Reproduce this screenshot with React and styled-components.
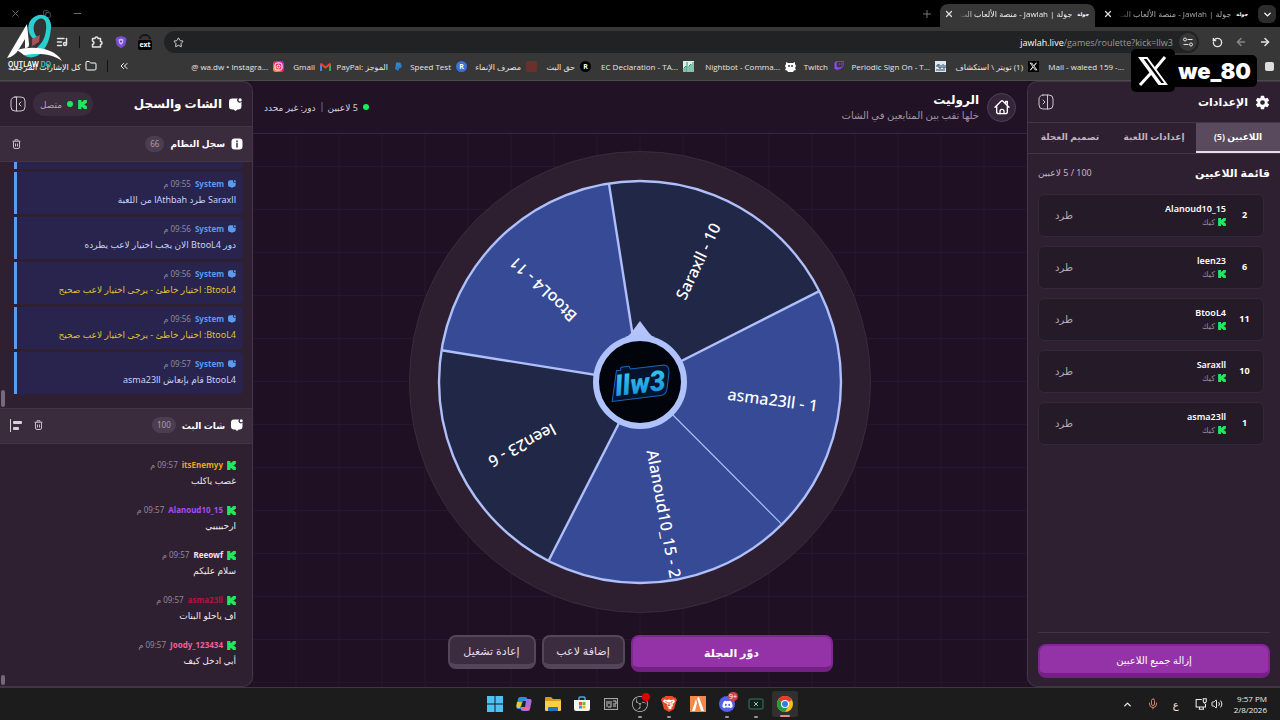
import styled, { createGlobalStyle, ThemeProvider, css } from "styled-components";
import {
  ArrowLeft,
  ArrowRight,
  ChevronDown,
  ChevronUp,
  ChevronsLeft,
  Copy,
  Folder,
  ListMusic,
  Mic,
  Minus,
  Plus,
  RotateCcw,
  Star,
  Volume2,
  X,
} from "lucide-react";
import { FaDiscord, FaPaypal, FaTwitch, FaXTwitter } from "react-icons/fa6";
import { IoSettingsSharp } from "react-icons/io5";
import { SiObsstudio } from "react-icons/si";

const theme = {
  colors: {
    page: "#1f1024",
    panel: "#2e1f31",
    panelRaised: "#3a2b3d",
    line: "#43344a",
    card: "#251a27",
    accent: "#9433a8",
    accentDark: "#732183",
    kick: "#1fe85c",
    system: "#5a9bf0",
    wheelLight: "#374a96",
    wheelDark: "#212746",
    wheelLine: "#aebffa",
  },
  fonts: {
    ui: '"Noto Sans", "DejaVu Sans", sans-serif',
    chrome: '"Open Sans", "DejaVu Sans", sans-serif',
  },
};

const GlobalStyle = createGlobalStyle`
  * {
    box-sizing: border-box;
  }
  body {
    margin: 0;
    background: #1c1c1c;
  }
  button {
    font-family: inherit;
    padding: 0;
    border: 0;
    background: none;
    color: inherit;
    cursor: pointer;
  }
  h1, h2, h3, p, ul {
    margin: 0;
    padding: 0;
  }
  ul {
    list-style: none;
  }
`;

/* ---------- data ---------- */

const bookmarks = [
  { label: "", icon: "square", width: 135 },
  { label: "Mail - waleed 159 -...", icon: "blank", width: 101 },
  { label: "(1) تويتر \\ استكشاف", icon: "x", width: 93 },
  { label: "Periodic Sign On - T...", icon: "tsn", width: 102 },
  { label: "Twitch", icon: "twitch", width: 48 },
  { label: "Nightbot - Comma...", icon: "nightbot", width: 102 },
  { label: "EC Declaration - TA...", icon: "green", width: 103 },
  { label: "حق البث", icon: "rBlack", width: 54 },
  { label: "مصرف الإنماء", icon: "red", width: 70 },
  { label: "Speed Test", icon: "rBlue", width: 63 },
  { label: "PayPal: الموجز", icon: "paypal", width: 73 },
  { label: "Gmail", icon: "gmail", width: 47 },
  { label: "@ wa.dw • Instagra...", icon: "insta", width: 96 },
];

const systemLog = [
  { time: "09:55", text: "Saraxll طرد lAthbah من اللعبة" },
  { time: "09:56", text: "دور BtooL4 الان يجب اختيار لاعب يطرده" },
  { time: "09:56", text: "BtooL4: اختيار خاطئ - يرجى اختيار لاعب صحيح", warn: true },
  { time: "09:56", text: "BtooL4: اختيار خاطئ - يرجى اختيار لاعب صحيح", warn: true },
  { time: "09:57", text: "BtooL4 قام بإنعاش asma23ll" },
];

const chat = [
  { name: "itsEnemyy", color: "#f5a31a", text: "غصب ياكلب" },
  { name: "Alanoud10_15", color: "#a94df0", text: "ارحبيييي" },
  { name: "Reeowf", color: "#fbe0ee", text: "سلام عليكم" },
  { name: "asma23ll", color: "#b5123f", text: "اف ياحلو البنات" },
  { name: "Joody_123434", color: "#f2609a", text: "أبي ادخل كيف" },
];

const players = [
  { id: 2, name: "Alanoud10_15" },
  { id: 6, name: "leen23" },
  { id: 11, name: "BtooL4" },
  { id: 10, name: "Saraxll" },
  { id: 1, name: "asma23ll" },
];

const slices = [
  { label: "Saraxll - 10", dark: true },
  { label: "asma23ll - 1" },
  { label: "Alanoud10_15 - 2" },
  { label: "leen23 - 6", dark: true },
  { label: "BtooL4 - 11" },
];

/* ---------- small drawings ---------- */

const KickMark = ({ size = 9 }) => (
  <svg width={size} height={size} viewBox="1 0 22 24" preserveAspectRatio="none" aria-hidden="true">
    <path
      fill="#1fe85c"
      d="M1.3 0h8v5.3H12V2.7h2.7V0h8v8H20v2.7h-2.7v2.6H20V16h2.7v8h-8v-2.7H12v-2.6H9.3V24h-8z"
    />
  </svg>
);

const ChatIcon = ({ size = 12, color = "#fff" }) => (
  <svg width={size} height={size} viewBox="0 0 24 24" fill={color} aria-hidden="true">
    <path d="M6 1h10a4.500 4.500 0 0 0 7 6v8a6 6 0 0 1-6 6h-1.500L12 24l-3.500-3H6a6 6 0 0 1-6-6V7a6 6 0 0 1 6-6z" />
    <circle cx="20.500" cy="3.500" r="3" />
  </svg>
);

const HomeIcon = () => (
  <svg width="16" height="16" viewBox="0 0 24 24" fill="none" stroke="#fff" strokeWidth="2" strokeLinecap="round" strokeLinejoin="round" aria-hidden="true">
    <path d="M1.500 12.500 10.500 3.300a2.200 2.200 0 0 1 3 0l9 9.200" />
    <path d="M4 10.500V19a3 3 0 0 0 3 3h10a3 3 0 0 0 3-3v-8.500M17.500 6V3.500H20V8" />
    <path d="M9 22v-3.500a3 3 0 0 1 6 0V22" />
  </svg>
);

const InfoIcon = () => (
  <svg width="12" height="12" viewBox="0 0 24 24" aria-hidden="true">
    <rect x="1" y="1" width="22" height="22" rx="6" fill="#fff" />
    <path d="M12 11v7M12 6v1.500" stroke="#3a2b3d" strokeWidth="3" strokeLinecap="round" />
  </svg>
);

const AlignIcon = () => (
  <svg width="12" height="13" viewBox="0 0 12 13" fill="#d8cfda" aria-hidden="true">
    <path d="M0 0h1v13H0z" />
    <rect x="3" y="2" width="9" height="3" rx="1" />
    <rect x="3" y="8" width="6" height="3" rx="1" />
  </svg>
);

const TrashIcon = () => (
  <svg width="9" height="10" viewBox="0 0 18 20" fill="none" stroke="currentColor" strokeWidth="2" aria-hidden="true">
    <path d="M1 4.500h16M6 4V1.500h6V4M3 5v11q0 3 3 3h6q3 0 3-3V5M7 9v6M11 9v6" />
  </svg>
);

const PanelIcon = ({ opens }) => (
  <svg width="16" height="16" viewBox="0 0 16 16" fill="none" stroke="currentColor" strokeLinecap="round" strokeLinejoin="round" aria-hidden="true">
    <rect x="1" y="1" width="14" height="14" rx="4" />
    {opens === "right" ? <path d="M9.500 1v14M5 6l2 2-2 2" /> : <path d="M6.500 1v14M11 6 9 8l2 2" />}
  </svg>
);

const PuzzleIcon = () => (
  <svg width="12" height="12" viewBox="0 0 24 24" fill="none" stroke="currentColor" strokeWidth="3" strokeLinejoin="round" aria-hidden="true">
    <path d="M3 5h5q0-3 3-3t3 3h5v6q3 0 3 3t-3 3v5H3v-5q3-1 3-3.500T3 10z" />
  </svg>
);

const TuneIcon = () => (
  <svg width="10" height="10" viewBox="0 0 20 20" fill="none" stroke="#e4e4e4" strokeWidth="2" aria-hidden="true">
    <circle cx="4" cy="5" r="3" />
    <path d="M9 5h10M1 15h10" />
    <circle cx="16" cy="15" r="3" />
  </svg>
);

function BookmarkIcon({ kind }) {
  if (kind === "x") {
    return (
      <IconTile $bg="#000">
        <FaXTwitter size={9} />
      </IconTile>
    );
  }
  if (kind === "twitch") return <IconTile><FaTwitch size={10} color="#8b4af0" /></IconTile>;
  if (kind === "paypal") return <IconTile><FaPaypal size={9} color="#2a86d8" /></IconTile>;
  if (kind === "rBlack") return <IconTile $bg="#000" $round>R</IconTile>;
  if (kind === "rBlue") return <IconTile $bg="#3d6fe0" $round>R</IconTile>;
  return (
    <svg width="11" height="11" viewBox="0 0 11 11" aria-hidden="true">
      {kind === "square" && <rect x="1" y="1" width="9" height="9" rx="2" fill="#ddd" />}
      {kind === "red" && <rect width="11" height="11" rx="2" fill="#6b302b" />}
      {kind === "tsn" && (
        <>
          <path d="M0 0h11v11H0z" fill="#dfe9f2" />
          <path d="M1 5h2v-2M4 3v4h2v-3M8 3v4h2v-3M1 9h9" stroke="#2b4a66" fill="none" />
        </>
      )}
      {kind === "green" && (
        <>
          <path d="M0 0h11v11H0z" fill="#dff0e9" />
          <path d="M1 11V7l2-2v6M4 11V1M6 11V5l2-2v8M10 1v10" stroke="#2e9077" fill="none" />
        </>
      )}
      {kind === "nightbot" && (
        <>
          <path d="M1 1l2 1h5l2-1v2l1 2-1 2 1 2-2 .5-1 1.500H3L2 9.500 0 9l1-2-1-2 1-2z" fill="#fff" />
          <circle cx="4" cy="5" r="1" fill="#373737" />
          <circle cx="7" cy="5" r="1" fill="#373737" />
        </>
      )}
      {kind === "gmail" && (
        <>
          <path d="M1 10V3" stroke="#4285f4" strokeWidth="2" />
          <path d="M10 10V3" stroke="#34a853" strokeWidth="2" />
          <path d="M.5 2.500 5.500 6.500l5-4" stroke="#ea4335" strokeWidth="2" fill="none" />
        </>
      )}
      {kind === "insta" && (
        <>
          <defs>
            <linearGradient id="insta" x1="0" y1="1" x2="1" y2="0">
              <stop offset="0" stopColor="#ffb52e" />
              <stop offset="0.5" stopColor="#f0245f" />
              <stop offset="1" stopColor="#b02bd8" />
            </linearGradient>
          </defs>
          <rect width="11" height="11" rx="3" fill="url(#insta)" />
          <rect x="2" y="2" width="7" height="7" rx="2" fill="none" stroke="#fff" />
          <circle cx="5.500" cy="5.500" r="1.500" fill="none" stroke="#fff" />
        </>
      )}
    </svg>
  );
}

const ShieldIcon = () => (
  <svg width="12" height="12" viewBox="0 0 24 24" aria-hidden="true">
    <path d="M12 0l9 3 2 3-2 10c-1 4-6 7-9 8-3-1-8-4-9-8L1 6l2-3z" fill="#7a4fd0" />
    <path d="M12 5l5 2-1 7-4 4-4-4-1-7z" fill="#c9b0ff" />
    <circle cx="12" cy="11" r="2" fill="#5b34b0" />
  </svg>
);

const ExtIcon = () => (
  <svg width="14" height="16" viewBox="0 0 14 16" aria-hidden="true">
    <path d="M2 5a5 4 0 0 1 10 0" fill="none" stroke="#161616" strokeWidth="2" />
    <rect y="6" width="14" height="10" rx="2" fill="#000" />
    <text x="7" y="13" fill="#fff" fontSize="7" fontWeight="700" textAnchor="middle" direction="ltr">
      ext
    </text>
  </svg>
);

const ChannelLogo = () => (
  <svg width="62" height="60" viewBox="0 0 62 60" aria-label="OUTLAW DQ">
    <path
      d="M30 27C22 22 20 8 31 3c9-4 16 3 15 12-1 11-4 19-10 25-6 6-16 6-20-1 8 2 13-2 15-12z"
      fill="#29cfd0"
    />
    <path d="M33 25C27 20 27 9 34 6c6-2 8 4 7 11-1 9-5 15-11 19-3 2-6 2-8 2 6-2 9-7 11-13z" fill="#333" />
    <path d="M22 11 2 45c5-1 9-4 12-9l6-10v9c3 0 4-1 4-4z" fill="#fff" />
    <path d="M12 37c16-5 38-2 45 11-10-8-26-8-38-6z" fill="#fff" />
    <path d="M27 26l8-4-1 7-7 4z" fill="#a5525c" />
    <text x="3" y="54" fill="#fff" fontSize="7" fontFamily="Inter, sans-serif" fontWeight="600" direction="ltr">
      OUTLAW <tspan fill="#29cfd0">DQ</tspan>
    </text>
  </svg>
);

/* ---------- wheel ---------- */

const CENTER = 231;
const RADIUS = 201;
const START = -98.9;
const STEP = 72;

const point = (deg, r) => {
  const rad = (deg * Math.PI) / 180;
  return [CENTER + r * Math.cos(rad), CENTER + r * Math.sin(rad)];
};

function Wheel() {
  return (
    <WheelSvg viewBox="0 0 462 462" role="img" aria-label="الروليت">
      <defs>
        <linearGradient id="hubText" x1="0" y1="0" x2="0" y2="1">
          <stop offset="0" stopColor="#35d2f2" />
          <stop offset="1" stopColor="#1687d8" />
        </linearGradient>
      </defs>
      <circle cx={CENTER} cy={CENTER} r="230.500" fill="#2d1e30" stroke="#3b2b3e" />
      {slices.map((slice, i) => {
        const a = START + i * STEP;
        const [x1, y1] = point(a, RADIUS);
        const [x2, y2] = point(a + STEP, RADIUS);
        return (
          <path
            key={slice.label}
            d={`M${CENTER} ${CENTER}L${x1} ${y1}A${RADIUS} ${RADIUS} 0 0 1 ${x2} ${y2}Z`}
            fill={slice.dark ? theme.colors.wheelDark : theme.colors.wheelLight}
          />
        );
      })}
      {slices.map((slice, i) => {
        const [x, y] = point(START + i * STEP, RADIUS);
        return (
          <line
            key={slice.label}
            x1={CENTER}
            y1={CENTER}
            x2={x}
            y2={y}
            stroke={theme.colors.wheelLine}
            strokeWidth={i === 2 ? 1.2 : 2.4}
          />
        );
      })}
      <circle cx={CENTER} cy={CENTER} r={RADIUS} fill="none" stroke={theme.colors.wheelLine} strokeWidth="2.4" />
      {slices.map((slice, i) => (
        <SliceLabel
          key={slice.label}
          x={CENTER + 134}
          y={CENTER}
          transform={`rotate(${START + 34.500 + i * STEP} ${CENTER} ${CENTER})`}
        >
          {slice.label}
        </SliceLabel>
      ))}
      <path d="M231 170l9 12q2 3 6 4h-30q4-1 6-4z" fill="#b4c4fb" />
      <circle cx={CENTER} cy={CENTER} r="44" fill="#02040c" stroke="#b0c2fb" strokeWidth="6" />
      <g transform="rotate(-7 231 231)">
        <path
          d="M209 217h4l1-3h8l1 3h34q5 1 4 8l-4 16q-2 6-7 6h-49z"
          fill="#04142e"
          stroke="#1f66b8"
        />
        <HubText x="231" y="242" transform="translate(0 0)">llw3</HubText>
      </g>
    </WheelSvg>
  );
}

/* ---------- browser ---------- */

function BrowserTab({ active }) {
  return (
    <Tab $active={active}>
      <TabLogo>جولة</TabLogo>
      <TabTitle>جولة | Jawlah - منصة الألعاب الت</TabTitle>
      <TabClose aria-label="إغلاق">
        <X size={10} strokeWidth={3} />
      </TabClose>
    </Tab>
  );
}

function Browser() {
  return (
    <header>
      <TabStrip>
        <TabSearch aria-label="البحث في علامات التبويب">
          <ChevronDown size={11} strokeWidth={3} />
        </TabSearch>
        <BrowserTab />
        <BrowserTab active />
        <NewTab aria-label="علامة تبويب جديدة">
          <Plus size={12} />
        </NewTab>
        <WindowButtons>
          <button aria-label="تصغير"><Minus size={11} /></button>
          <button aria-label="استعادة"><Copy size={8} /></button>
          <button aria-label="إغلاق"><X size={11} /></button>
        </WindowButtons>
      </TabStrip>
      <Toolbar>
        <ToolButton aria-label="السابق"><ArrowRight size={12} strokeWidth={3} /></ToolButton>
        <ToolButton aria-label="التالي" $dim><ArrowLeft size={12} strokeWidth={3} /></ToolButton>
        <ToolButton aria-label="إعادة تحميل"><RotateCcw size={11} strokeWidth={3} /></ToolButton>
        <Omnibox>
          <SiteButton aria-label="معلومات الموقع"><TuneIcon /></SiteButton>
          <Url>
            <b>jawlah.live</b>/games/roulette?kick=llw3
          </Url>
          <ToolButton aria-label="إشارة مرجعية"><Star size={11} strokeWidth={2} /></ToolButton>
        </Omnibox>
        <ToolButton aria-label="ext"><ExtIcon /></ToolButton>
        <ToolButton aria-label="Brave"><ShieldIcon /></ToolButton>
        <ToolButton aria-label="الإضافات"><PuzzleIcon /></ToolButton>
        <BarDivider />
        <ToolButton aria-label="الوسائط"><ListMusic size={12} strokeWidth={3} /></ToolButton>
        <ToolSpacer />
      </Toolbar>
      <BookmarkBar>
        {bookmarks.map((b) => (
          <Bookmark key={b.icon} href="#" $width={b.width} aria-label={b.label || "تطبيقات"}>
            <BookmarkIcon kind={b.icon} />
            <span dir="auto">{b.label}</span>
          </Bookmark>
        ))}
        <BookmarkEnd>
          <ChevronsLeft size={12} strokeWidth={2} />
          <BarDivider $wide />
          <Folder size={12} strokeWidth={2} />
          <span>كل الإشارات المرجعية</span>
        </BookmarkEnd>
      </BookmarkBar>
    </header>
  );
}

/* ---------- page ---------- */

function SettingsPanel() {
  return (
    <Side $side="right">
      <SideHead $height={40}>
        <IoSettingsSharp size={15} />
        <SideTitle $small>الإعدادات</SideTitle>
        <IconButton aria-label="طي اللوحة"><PanelIcon opens="right" /></IconButton>
      </SideHead>
      <Tabs>
        <TabButton $active>اللاعبين (5)</TabButton>
        <TabButton>إعدادات اللعبة</TabButton>
        <TabButton>تصميم العجلة</TabButton>
      </Tabs>
      <ListHead>
        <h3>قائمة اللاعبين</h3>
        <span>100 / 5 لاعبين</span>
      </ListHead>
      <PlayerList>
        {players.map((p) => (
          <PlayerCard key={p.id}>
            <PlayerNumber>{p.id}</PlayerNumber>
            <PlayerInfo>
              <PlayerName>{p.name}</PlayerName>
              <Platform>
                <KickMark size={8} />
                كيك
              </Platform>
            </PlayerInfo>
            <KickButton>طرد</KickButton>
          </PlayerCard>
        ))}
      </PlayerList>
      <SideFoot>
        <PrimaryButton $height={34}>إزالة جميع اللاعبين</PrimaryButton>
      </SideFoot>
    </Side>
  );
}

function Stage() {
  return (
    <StageArea>
      <StageHead>
        <HomeButton href="#" aria-label="الرئيسية"><HomeIcon /></HomeButton>
        <StageTitles>
          <h1>الروليت</h1>
          <p>خلها تقب بين المتابعين في الشات</p>
        </StageTitles>
        <Status>
          <Dot />
          <span>5 لاعبين</span>
          <StatusDivider />
          <span>دور: غير محدد</span>
        </Status>
      </StageHead>
      <WheelArea>
        <Wheel />
        <Controls>
          <PrimaryButton $height={37} $width={202} $bold>دوّر العجلة</PrimaryButton>
          <GhostButton $width={83}>إضافة لاعب</GhostButton>
          <GhostButton $width={88}>إعادة تشغيل</GhostButton>
        </Controls>
      </WheelArea>
    </StageArea>
  );
}

function ChatPanel() {
  return (
    <Side $side="left">
      <SideHead $height={44}>
        <ChatIcon size={13} />
        <SideTitle>الشات والسجل</SideTitle>
        <Connected>
          <KickMark />
          <Dot />
          متصل
        </Connected>
        <IconButton aria-label="طي اللوحة"><PanelIcon opens="left" /></IconButton>
      </SideHead>
      <SectionHead>
        <InfoIcon />
        <h3>سجل النظام</h3>
        <Count>66</Count>
        <SectionTools>
          <button aria-label="مسح"><TrashIcon /></button>
        </SectionTools>
      </SectionHead>
      <Feed $pad={14}>
        <SystemItem />
        {systemLog.map((m, i) => (
          <SystemItem key={i}>
            <Meta>
              <ChatIcon size={8} color={theme.colors.system} />
              <Author $color={theme.colors.system}>System</Author>
              <Time>{m.time} م</Time>
            </Meta>
            <Message $warn={m.warn} $system>{m.text}</Message>
          </SystemItem>
        ))}
        <Thumb $height={17} />
      </Feed>
      <SectionHead>
        <ChatIcon size={12} />
        <h3>شات البث</h3>
        <Count>100</Count>
        <SectionTools>
          <button aria-label="مسح"><TrashIcon /></button>
          <button aria-label="محاذاة"><AlignIcon /></button>
        </SectionTools>
      </SectionHead>
      <Feed $pad={11}>
        {chat.map((m) => (
          <ChatItem key={m.name}>
            <Meta>
              <KickMark />
              <Author $color={m.color}>{m.name}</Author>
              <Time>09:57 م</Time>
            </Meta>
            <Message>{m.text}</Message>
          </ChatItem>
        ))}
        <Thumb $height={10} />
      </Feed>
    </Side>
  );
}

/* ---------- taskbar ---------- */

const TaskSvg = ({ children, size = 16 }) => (
  <svg width={size} height={size} viewBox="0 0 16 16" aria-hidden="true">
    {children}
  </svg>
);

function Taskbar() {
  return (
    <TaskbarRow dir="ltr">
      <TaskApps>
        <TaskApp aria-label="Start">
          <TaskSvg>
            <path d="M0 0h7.500v7.500H0zM8.500 0H16v7.500H8.500zM0 8.500h7.500V16H0zM8.500 8.500H16V16H8.500z" fill="#4cc2f5" />
          </TaskSvg>
        </TaskApp>
        <TaskApp aria-label="Copilot">
          <TaskSvg>
            <path d="M4 1h5q2 0 2.500 2l-3 8Q7.500 13 5 13H2q-2 0-1.500-3L2 3q.5-2 2-2z" fill="#2390ea" />
            <path d="M1 6h5l-2 6H2q-2 0-1.500-3z" fill="#e8c63c" />
            <path d="M12 15H7q-2 0-2.500-2l3-8Q8.500 3 11 3h3q2 0 1.500 3L14 13q-.5 2-2 2z" fill="#a86be8" />
            <path d="M5 11h9l-1 3H7q-2 0-2-3z" fill="#ee6a8c" />
            <path d="M7 5h3l-1 6H5z" fill="#1c2430" />
          </TaskSvg>
        </TaskApp>
        <TaskApp aria-label="Explorer">
          <TaskSvg>
            <path d="M0 2q0-1 1-1h5l2 2h7q1 0 1 1v4H0z" fill="#d69a24" />
            <path d="M0 5h16v9q0 1-1 1H1q-1 0-1-1z" fill="#f8ce4b" />
            <path d="M3 15v-3q0-1 1-1h8q1 0 1 1v3z" fill="#1e76bd" />
          </TaskSvg>
        </TaskApp>
        <TaskApp aria-label="Store">
          <TaskSvg>
            <path d="M5 4V2q0-1 1-1h4q1 0 1 1v2" stroke="#46a6e8" fill="none" strokeWidth="1.500" />
            <path d="M0 4h16v9q0 2-2 2H2q-2 0-2-2z" fill="#f3f5f7" />
            <path d="M5 6h3v3H5z" fill="#e8512f" />
            <path d="M8.500 6h3v3h-3z" fill="#76b82a" />
            <path d="M5 9.500h3v3H5z" fill="#2b9fe6" />
            <path d="M8.500 9.500h3v3h-3z" fill="#f6b50f" />
          </TaskSvg>
        </TaskApp>
        <TaskApp aria-label="Device">
          <TaskSvg>
            <rect x="1.500" y="2.500" width="13" height="11" fill="#2a2a2a" stroke="#a5a5a5" />
            <path d="M4 5v6M6 5v3M8 5v6M10 5h3v3h-3M10 10h3M5 11h3" stroke="#c2c2c2" fill="none" />
          </TaskSvg>
        </TaskApp>
        <TaskApp aria-label="OBS" $running>
          <SiObsstudio size={16} color="#c4c4c4" />
          <RecDot />
        </TaskApp>
        <TaskApp aria-label="Brave" $running>
          <TaskSvg>
            <path d="M4.500 0h7L13 1.500l1.500 0L16 4l-1 2-2 7-5 3-5-3L1 6 0 4l1.500-2.500H3z" fill="#ef4a2c" />
            <path
              d="M3 3.500l3 .5 2-.5 2 .5 3-.5 1 2-2.500 3 .5 1.500-2 1 1 1-2 1.500-2-1.500 1-1-2-1 .5-1.500L2 5.500z"
              fill="#fff"
            />
            <path d="M4.500 5.500l2 1M11.500 5.500l-2 1M8 6v2.500l-1 1h2l-1-1M6 8.500l-1-1M10 8.500l1-1" stroke="#ef4a2c" fill="none" />
          </TaskSvg>
        </TaskApp>
        <TaskApp aria-label="FiveM">
          <TaskSvg>
            <path d="M0 0h16v16H0z" fill="#ef8a4a" />
            <path d="M2 15 6 3l1 4-2 8zM7 2l2-1 5 14h-3z" fill="#fff" />
          </TaskSvg>
        </TaskApp>
        <TaskApp aria-label="Discord" $running>
          <DiscordTile><FaDiscord size={11} /></DiscordTile>
          <Notice>9+</Notice>
        </TaskApp>
        <TaskApp aria-label="Console" $running>
          <TaskSvg>
            <rect x="1" y="3" width="14" height="10" rx="1" fill="#14201c" stroke="#3c7864" />
            <path d="m6 6 4 4m0-4-4 4" stroke="#7fd0ae" />
          </TaskSvg>
        </TaskApp>
        <TaskApp aria-label="Chrome" $running $active>
          <TaskSvg>
            <circle cx="8" cy="8" r="8" fill="#fbc116" />
            <path d="M8 8 1.100 4A8 8 0 0 1 14.900 4z" fill="#e33b2e" />
            <path d="M8 8 1.100 4A8 8 0 0 0 8 16l3.500-6z" fill="#249a46" />
            <circle cx="8" cy="8" r="4" fill="#fff" />
            <circle cx="8" cy="8" r="3" fill="#2f7de9" />
          </TaskSvg>
        </TaskApp>
      </TaskApps>
      <Tray>
        <TrayIcons>
          <ChevronUp size={11} strokeWidth={3} />
          <Mic size={12} color="#c98570" />
          <span>ع</span>
        </TrayIcons>
        <TrayPair>
          <TaskSvg size={12}>
            <path d="M9 2H1.500v10H14V8M5 15h7M6 12v3M11 12v3" fill="none" stroke="#eee" strokeWidth="1.400" />
            <path d="M11 1h4v4l-2 2-2-2z" fill="none" stroke="#eee" strokeWidth="1.400" />
          </TaskSvg>
          <Volume2 size={12} />
        </TrayPair>
        <Clock>
          9:57 PM
          <br />
          2/8/2026
        </Clock>
      </Tray>
    </TaskbarRow>
  );
}

export default function App() {
  return (
    <ThemeProvider theme={theme}>
      <GlobalStyle />
      <Page dir="rtl">
        <Browser />
        <Content>
          <SettingsPanel />
          <Stage />
          <ChatPanel />
        </Content>
        <Taskbar />
        <ChannelBadge><ChannelLogo /></ChannelBadge>
        <Handle dir="ltr">
          <HandleMark>
            <svg width="30" height="30" viewBox="0 0 30 30" aria-hidden="true">
              <path d="M27 1 17 13M13 17 2 29" fill="none" stroke="#fff" strokeWidth="3" />
              <path d="M2 2h7l19 26h-7z" fill="#000" stroke="#fff" strokeWidth="2" />
              <path d="M3 2h2l19 26h-3z" fill="#fff" />
            </svg>
          </HandleMark>
          <HandleName>we_80</HandleName>
        </Handle>
      </Page>
    </ThemeProvider>
  );
}

/* ---------- styles ---------- */

const Page = styled.div`
  position: relative;
  display: flex;
  flex-direction: column;
  min-height: 100vh;
  overflow: hidden;
  background: ${({ theme }) => theme.colors.page};
  color: #fff;
  font-family: ${({ theme }) => theme.fonts.ui};
  font-size: 10px;
`;

const TabStrip = styled.div`
  display: flex;
  align-items: flex-end;
  height: 27px;
  padding-right: 4px;
  background: #000;
  font-family: ${({ theme }) => theme.fonts.chrome};
`;

const TabSearch = styled.button`
  display: grid;
  place-items: center;
  width: 18px;
  height: 18px;
  margin: 0 0 4px 4px;
  border-radius: 6px;
  background: #2c2c2c;
`;

const Tab = styled.div`
  display: flex;
  align-items: center;
  gap: 5px;
  width: 155px;
  height: 23px;
  padding: 0 6px 3px;
  border-radius: 8px 8px 0 0;
  background: ${({ $active }) => ($active ? "#373737" : "transparent")};
  color: ${({ $active }) => ($active ? "#eee" : "#aaa")};

  & + & {
    margin-right: 4px;
  }
`;

const TabLogo = styled.span`
  flex-shrink: 0;
  color: #fff;
  font-size: 5px;
  font-weight: 700;
`;

const TabTitle = styled.span`
  flex: 1;
  white-space: nowrap;
  font-size: 8px;
  line-height: 16px;
  mask-image: linear-gradient(to right, transparent, #000 16px);
`;

const TabClose = styled.button`
  display: grid;
  place-items: center;
  color: #ddd;
`;

const NewTab = styled.button`
  align-self: center;
  display: grid;
  place-items: center;
  width: 26px;
  color: #777;
`;

const WindowButtons = styled.div`
  display: flex;
  align-self: center;
  margin-right: auto;
  color: #777;

  button {
    display: grid;
    place-items: center;
    width: 31px;
  }
`;

const Toolbar = styled.div`
  display: flex;
  align-items: center;
  height: 28px;
  padding: 2px 3px 0;
  background: #373737;
  font-family: ${({ theme }) => theme.fonts.chrome};
`;

const ToolButton = styled.button`
  display: grid;
  place-items: center;
  width: 24px;
  height: 22px;
  color: ${({ $dim }) => ($dim ? "#888" : "#e4e4e4")};
`;

const ToolSpacer = styled.span`
  width: 47px;
`;

const Omnibox = styled.div`
  display: flex;
  flex: 1;
  align-items: center;
  gap: 6px;
  height: 22px;
  margin: 0 6px 0 7px;
  padding: 0 2px;
  border-radius: 11px;
  background: #202223;
`;

const SiteButton = styled.button`
  display: grid;
  place-items: center;
  width: 18px;
  height: 18px;
  border-radius: 50%;
  background: #373737;
`;

const Url = styled.span`
  flex: 1;
  direction: ltr;
  text-align: right;
  color: #9a9a9a;
  font-size: 9px;

  b {
    color: #fff;
    font-weight: 500;
  }
`;

const BarDivider = styled.span`
  width: 1px;
  height: 12px;
  margin: 0 ${({ $wide }) => ($wide ? 6 : 5)}px;
  background: #111;
`;

const BookmarkBar = styled.nav`
  display: flex;
  align-items: center;
  height: 26px;
  padding: 0 5px 3px 0;
  border-bottom: 1px solid #4a4a4a;
  background: #373737;
  font-family: ${({ theme }) => theme.fonts.chrome};
  font-size: 8px;
`;

const Bookmark = styled.a`
  display: flex;
  flex: 0 0 ${({ $width }) => $width}px;
  align-items: center;
  gap: 5px;
  color: #e6e6e6;
  text-decoration: none;
  white-space: nowrap;
`;

const IconTile = styled.i`
  display: grid;
  place-items: center;
  width: 11px;
  height: 11px;
  border-radius: ${({ $round }) => ($round ? "50%" : 0)};
  background: ${({ $bg }) => $bg || "none"};
  color: #fff;
  font-size: 7px;
  font-style: normal;
  font-weight: 700;
`;

const BookmarkEnd = styled.div`
  display: flex;
  flex: 1;
  align-items: center;
  justify-content: flex-end;
  gap: 4px;
  padding-left: 8px;
  white-space: nowrap;
`;

const Content = styled.main`
  display: grid;
  flex: 1;
  grid-template-columns: 253px 1fr 253px;
`;

const Side = styled.aside`
  display: flex;
  flex-direction: column;
  overflow: hidden;
  border: 1px solid ${({ theme }) => theme.colors.line};
  background: ${({ theme }) => theme.colors.panel};
  ${({ $side }) =>
    $side === "right"
      ? css`
          border-right: 0;
          border-radius: 10px 0 0 10px;
        `
      : css`
          border-left: 0;
          border-radius: 0 10px 10px 0;
        `}
`;

const SideHead = styled.div`
  display: flex;
  align-items: center;
  gap: 7px;
  height: ${({ $height }) => $height}px;
  padding: 0 10px;
`;

const SideTitle = styled.h2`
  flex: 1;
  font-size: ${({ $small }) => ($small ? 11 : 12)}px;
  line-height: 20px;
`;

const IconButton = styled.button`
  display: grid;
  place-items: center;
  color: #cfc5d1;
`;

const Connected = styled.span`
  display: flex;
  align-items: center;
  gap: 5px;
  height: 24px;
  padding: 0 6px 0 7px;
  border-radius: 12px;
  background: ${({ theme }) => theme.colors.panelRaised};
  color: #b3a6b5;
  font-size: 9px;
`;

const Dot = styled.i`
  width: 6px;
  height: 6px;
  border-radius: 50%;
  background: ${({ theme }) => theme.colors.kick};
`;

const Tabs = styled.div`
  display: grid;
  grid-template-columns: repeat(3, 1fr);
  height: 32px;
  border: 1px solid ${({ theme }) => theme.colors.line};
  border-width: 1px 0;
`;

const TabButton = styled.button`
  padding-bottom: 2px;
  border-bottom: 2px solid ${({ $active }) => ($active ? "#e9dcec" : "transparent")};
  background: ${({ $active }) => ($active ? "#5a4a5e" : "transparent")};
  color: ${({ $active }) => ($active ? "#fff" : "#bfb3c1")};
  font-size: 9px;
  font-weight: 600;
`;

const ListHead = styled.div`
  display: flex;
  align-items: center;
  justify-content: space-between;
  padding: 9px 10px 11px;
  line-height: 20px;

  h3 {
    font-size: 11px;
  }

  span {
    color: #c3b7c5;
    font-size: 9px;
  }
`;

const PlayerList = styled.ul`
  display: flex;
  flex-direction: column;
  gap: 9px;
  padding: 0 16px 0 10px;
`;

const PlayerCard = styled.li`
  display: flex;
  align-items: center;
  height: 43px;
  padding-bottom: 2px;
  border: 1px solid #33283a;
  border-radius: 6px;
  background: ${({ theme }) => theme.colors.card};
`;

const PlayerNumber = styled.b`
  width: 37px;
  text-align: center;
  font-size: 9px;
`;

const PlayerInfo = styled.div`
  flex: 1;
`;

const PlayerName = styled.div`
  font-size: 9px;
  font-weight: 600;
  line-height: 14px;
`;

const Platform = styled.div`
  display: flex;
  align-items: center;
  gap: 3px;
  color: #95899a;
  font-size: 8px;
  line-height: 12px;
`;

const KickButton = styled.button`
  padding-left: 16px;
  color: #b6abb8;
  font-size: 10px;
`;

const SideFoot = styled.div`
  margin: auto 10px 8px;
  padding-top: 11px;
  border-top: 1px solid #43344a;
`;

const PrimaryButton = styled.button`
  width: ${({ $width }) => ($width ? `${$width}px` : "100%")};
  height: ${({ $height }) => $height}px;
  border: 2px solid #7f2892;
  border-bottom: 5px solid ${({ theme }) => theme.colors.accentDark};
  border-radius: 8px;
  background: ${({ theme }) => theme.colors.accent};
  color: #fff;
  font-size: ${({ $bold }) => ($bold ? 11 : 10)}px;
  font-weight: ${({ $bold }) => ($bold ? 700 : 500)};
`;

const GhostButton = styled.button`
  width: ${({ $width }) => $width}px;
  height: 34px;
  border: 2px solid #56465a;
  border-bottom: 5px solid #55455a;
  border-radius: 8px;
  background: #3c2c40;
  color: #e6dde8;
  font-size: 11px;
`;

const StageArea = styled.section`
  display: flex;
  flex-direction: column;
  background-color: ${({ theme }) => theme.colors.page};
  background-image: linear-gradient(#28172c 1px, transparent 1px),
    linear-gradient(to right, #28172c 1px, transparent 1px);
  background-size: 43px 43px;
  background-position: calc(50% + 21px) 42px;
`;

const StageHead = styled.div`
  display: flex;
  align-items: center;
  gap: 8px;
  height: 53px;
  padding: 0 11px;
  border-bottom: 1px solid #38273c;
  background: #211226;
`;

const HomeButton = styled.a`
  display: grid;
  place-items: center;
  width: 29px;
  height: 29px;
  border: 1px solid #514155;
  border-radius: 50%;
  background: #35253a;
`;

const StageTitles = styled.div`
  flex: 1;

  h1 {
    font-size: 12px;
    line-height: 16px;
  }

  p {
    color: #a294a5;
    font-size: 10px;
    line-height: 14px;
  }
`;

const Status = styled.div`
  display: flex;
  align-items: center;
  gap: 5px;
  color: #d9cfdb;
  font-size: 9px;
`;

const StatusDivider = styled.i`
  width: 2px;
  height: 10px;
  background: #4a3a4e;
`;

const WheelArea = styled.div`
  display: flex;
  flex: 1;
  flex-direction: column;
  align-items: center;
  gap: 22px;
  padding: 17px 16px 15px;
`;

const WheelSvg = styled.svg`
  display: block;
  width: 100%;
  max-width: 462px;
`;

const SliceLabel = styled.text`
  direction: ltr;
  fill: #fff;
  font-family: ${({ theme }) => theme.fonts.ui};
  font-size: 16px;
  font-weight: 500;
  text-anchor: middle;
  dominant-baseline: central;
`;

const HubText = styled.text`
  direction: ltr;
  fill: url(#hubText);
  font-family: Roboto, sans-serif;
  font-size: 28px;
  font-style: italic;
  font-weight: 900;
  text-anchor: middle;
`;

const Controls = styled.div`
  display: flex;
  gap: 6px;
`;

const SectionHead = styled.div`
  display: flex;
  flex-shrink: 0;
  align-items: center;
  gap: 6px;
  height: 36px;
  padding: 0 9px 1px 10px;
  border: 1px solid ${({ theme }) => theme.colors.line};
  border-width: 1px 0;
  background: ${({ theme }) => theme.colors.panelRaised};

  h3 {
    font-size: 9px;
  }
`;

const Count = styled.span`
  padding: 0 5px;
  border-radius: 8px;
  background: #4c3d50;
  color: #a99dab;
  font-size: 8px;
  line-height: 16px;
`;

const SectionTools = styled.div`
  display: flex;
  gap: 10px;
  margin-right: auto;
  color: #c6bbc8;

  button {
    display: grid;
    place-items: center;
    min-width: 12px;
  }
`;

const Feed = styled.div`
  position: relative;
  display: flex;
  flex: 1 1 0;
  flex-direction: column;
  justify-content: flex-end;
  gap: 3px;
  overflow: hidden;
  padding: 0 9px ${({ $pad }) => $pad}px 14px;
`;

const SystemItem = styled.article`
  flex-shrink: 0;
  height: 42px;
  padding: 4px 7px;
  border-left: 3px solid ${({ theme }) => theme.colors.system};
  border-radius: 0 4px 4px 0;
  background: #28244d;
`;

const ChatItem = styled.article`
  flex-shrink: 0;
  height: 42px;
  padding: 4px 7px;
`;

const Meta = styled.div`
  display: flex;
  align-items: center;
  gap: 4px;
  line-height: 16px;
`;

const Author = styled.b`
  color: ${({ $color }) => $color};
  font-size: 8px;
`;

const Time = styled.span`
  color: #94879b;
  font-size: 8px;
`;

const Message = styled.p`
  color: ${({ $warn, $system }) => ($warn ? "#dfc22f" : $system ? "#c3d3fb" : "#eee6f0")};
  font-size: 9px;
  line-height: 16px;
`;

const Thumb = styled.i`
  position: absolute;
  bottom: 1px;
  left: 1px;
  width: 4px;
  height: ${({ $height }) => $height}px;
  border-radius: 2px;
  background: #77687b;
`;

const TaskbarRow = styled.footer`
  display: grid;
  grid-template-columns: 1fr auto 1fr;
  align-items: center;
  height: 33px;
  border-top: 1px solid #3a3a3a;
  background: #1c1c1c;
  font-family: ${({ theme }) => theme.fonts.chrome};
`;

const TaskApps = styled.div`
  display: flex;
  grid-column: 2;
  gap: 3px;
`;

const TaskApp = styled.button`
  position: relative;
  display: grid;
  place-items: center;
  width: 26px;
  height: 26px;
  border-radius: 3px;
  background: ${({ $active }) => ($active ? "#303030" : "none")};

  &::after {
    content: "";
    position: absolute;
    bottom: ${({ $active }) => ($active ? 0 : -1)}px;
    width: ${({ $active }) => ($active ? 10 : 4)}px;
    height: 2px;
    border-radius: 1px;
    background: ${({ $running, $active }) => ($active ? "#e88a8a" : $running ? "#999" : "none")};
  }
`;

const RecDot = styled.i`
  position: absolute;
  top: 2px;
  right: 3px;
  width: 8px;
  height: 8px;
  border-radius: 50%;
  background: #e00000;
`;

const DiscordTile = styled.span`
  display: grid;
  place-items: center;
  width: 16px;
  height: 16px;
  border-radius: 50%;
  background: #5560e8;
  color: #fff;
`;

const Notice = styled.span`
  position: absolute;
  top: 1px;
  right: 2px;
  padding: 0 1px;
  border-radius: 5px;
  background: #cf3f4a;
  color: #fff;
  font-size: 7px;
  line-height: 9px;
`;

const Tray = styled.div`
  display: flex;
  align-items: center;
  justify-content: flex-end;
  gap: 11px;
  padding-right: 13px;
  color: #eee;
`;

const TrayIcons = styled.span`
  display: flex;
  align-items: center;
  gap: 14px;
  padding-right: 5px;
`;

const TrayPair = styled.span`
  display: flex;
  gap: 4px;
`;

const Clock = styled.span`
  text-align: right;
  font-size: 8px;
  line-height: 11px;
`;

const ChannelBadge = styled.div`
  position: absolute;
  top: 13px;
  left: 5px;
`;

const Handle = styled.div`
  position: absolute;
  top: 49px;
  right: 23px;
  display: flex;
  align-items: center;
`;

const HandleMark = styled.span`
  display: grid;
  place-items: center;
  width: 44px;
  height: 43px;
  border-radius: 5px;
  background: #000;
`;

const HandleName = styled.span`
  padding: 0 6px 0 3px;
  border-radius: 0 5px 5px 0;
  background: #000;
  font-family: Inter, sans-serif;
  font-size: 22px;
  font-weight: 900;
  line-height: 32px;
`;
